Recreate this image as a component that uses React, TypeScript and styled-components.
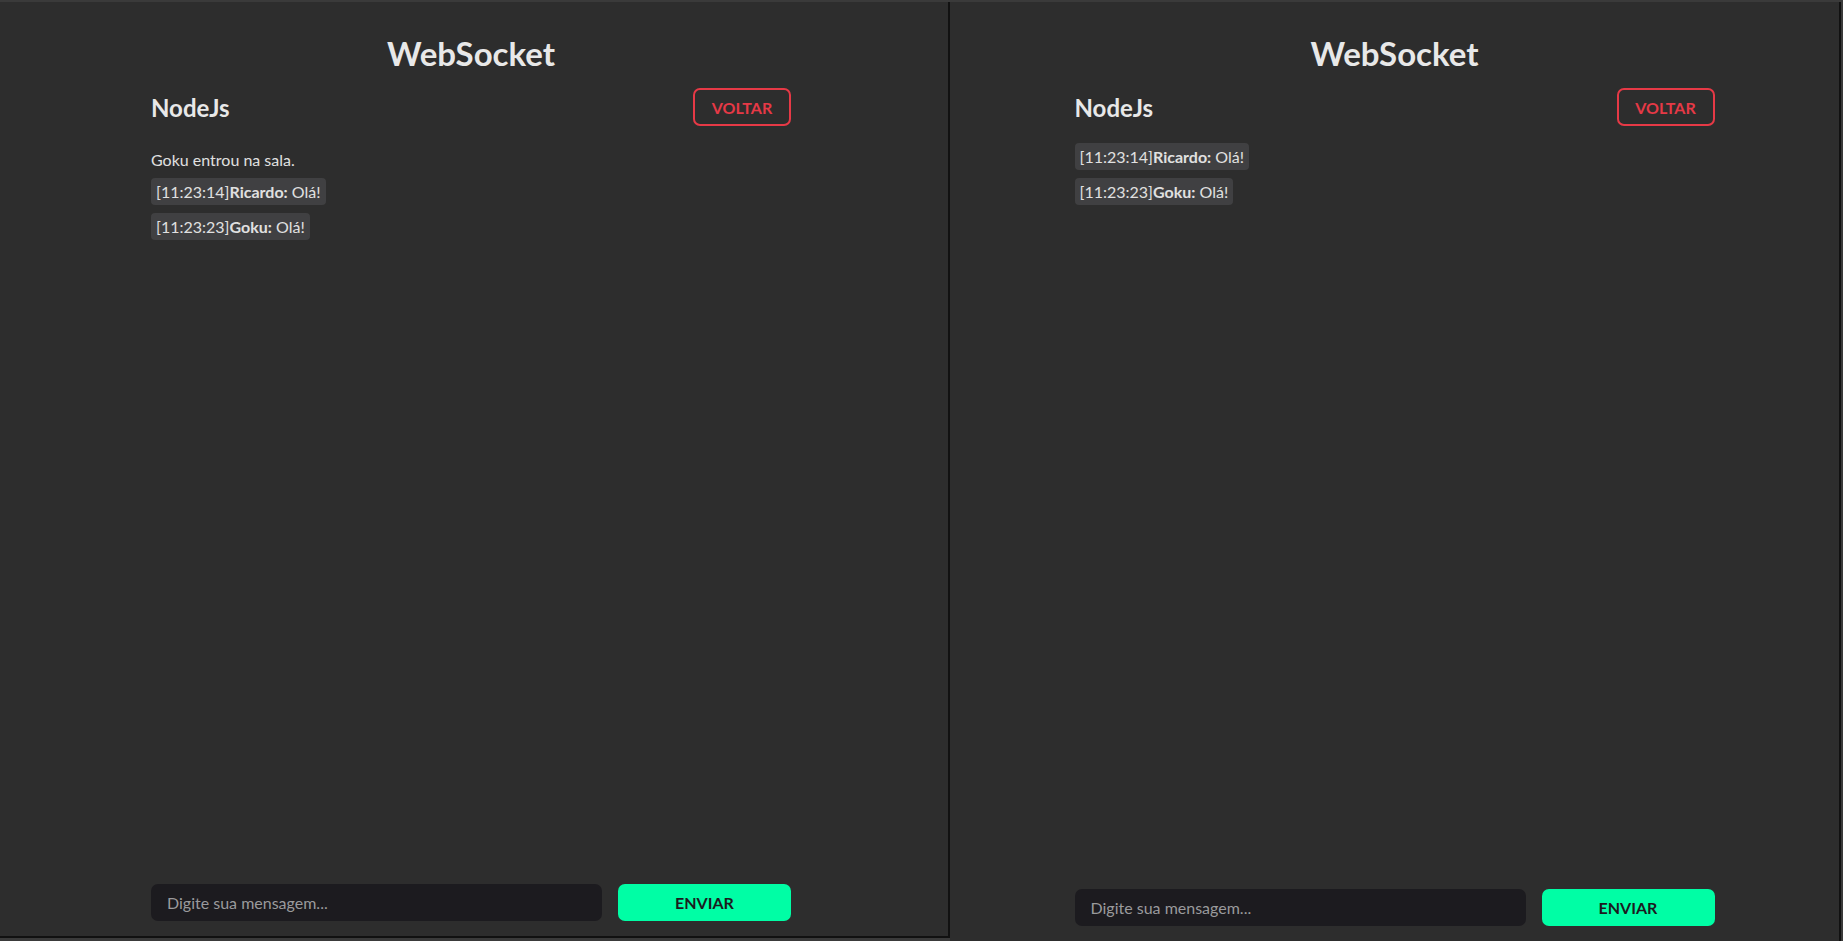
import styled, { createGlobalStyle } from "styled-components"

const GlobalStyle = createGlobalStyle`
  * {
    box-sizing: border-box;
  }

  body {
    margin: 0;
    background: #3a3a3a;
    font-family: Lato, "Open Sans", sans-serif;
    color: #e6e6e6;
    overflow: hidden;
  }
`

interface Message {
  time?: string
  user?: string
  text: string
}

const leftMessages: Message[] = [
  { text: "Goku entrou na sala." },
  { time: "11:23:14", user: "Ricardo", text: "Olá!" },
  { time: "11:23:23", user: "Goku", text: "Olá!" }
]

const rightMessages: Message[] = [
  { time: "11:23:14", user: "Ricardo", text: "Olá!" },
  { time: "11:23:23", user: "Goku", text: "Olá!" }
]

const ChatWindow = ({
  messages,
  first
}: {
  messages: Message[]
  first?: boolean
}) => (
  <Window $first={first}>
    <Title>WebSocket</Title>
    <Content>
      <Header>
        <RoomName>NodeJs</RoomName>
        <BackButton>VOLTAR</BackButton>
      </Header>
      <MessageList>
        {messages.map((m, i) =>
          m.user ? (
            <MessageItem key={i}>
              [{m.time}]<strong>{m.user}:</strong> {m.text}
            </MessageItem>
          ) : (
            <SystemItem key={i}>{m.text}</SystemItem>
          )
        )}
      </MessageList>
      <Footer>
        <MessageInput placeholder="Digite sua mensagem..." />
        <SendButton>ENVIAR</SendButton>
      </Footer>
    </Content>
  </Window>
)

const App = () => (
  <>
    <GlobalStyle />
    <Screen>
      <ChatWindow messages={leftMessages} first />
      <ChatWindow messages={rightMessages} />
    </Screen>
  </>
)

const Screen = styled.div`
  display: flex;
  align-items: flex-start;
  height: 941px;
  padding: 2px 2px 0 0;
`

const Window = styled.div<{ $first?: boolean }>`
  display: flex;
  flex-direction: column;
  align-items: center;
  background: #2d2d2d;
  border-right: 2px solid #111;
  width: ${(p) => (p.$first ? "950px" : "auto")};
  flex: ${(p) => (p.$first ? "none" : "1")};
  height: ${(p) => (p.$first ? "936px" : "939px")};
  border-bottom: ${(p) => (p.$first ? "2px solid #111" : "none")};
  padding: 32px ${(p) => (p.$first ? "6px" : "0")} 15px 0;
`

const Title = styled.h1`
  margin: 0;
  font-size: 33px;
  line-height: 38px;
  font-weight: 700;
  color: #e8e8e8;
`

const Content = styled.div`
  flex: 1;
  width: 640px;
  display: flex;
  flex-direction: column;
`

const Header = styled.div`
  display: flex;
  align-items: center;
  justify-content: space-between;
  margin-top: 16px;
`

const RoomName = styled.h2`
  margin: 0;
  font-size: 24px;
  font-weight: 700;
  color: #e8e8e8;
`

const BackButton = styled.button`
  width: 98px;
  height: 38px;
  border: 2px solid #e63946;
  border-radius: 7px;
  background: transparent;
  color: #e63946;
  font-family: inherit;
  font-size: 16px;
  font-weight: 700;
  cursor: pointer;
`

const MessageList = styled.ul`
  list-style: none;
  margin: 17px 0 0;
  padding: 0;
  display: flex;
  flex-direction: column;
  align-items: flex-start;
  gap: 8px;
`

const MessageItem = styled.li`
  height: 27px;
  line-height: 27px;
  padding: 0 5px;
  border-radius: 4px;
  background: #404042;
  font-size: 16px;
  color: #e0e0e0;

  strong {
    font-weight: 700;
  }
`

const SystemItem = styled(MessageItem)`
  background: transparent;
  padding: 3px 0 0;
`

const Footer = styled.div`
  margin-top: auto;
  display: flex;
  gap: 16px;
`

const MessageInput = styled.input`
  flex: 1;
  height: 37px;
  border: none;
  border-radius: 7px;
  background: #1c1b1f;
  padding: 0 16px;
  font-family: inherit;
  font-size: 16px;
  color: #e0e0e0;
  outline: none;

  &::placeholder {
    color: #9a9a9c;
  }
`

const SendButton = styled.button`
  width: 173px;
  height: 37px;
  border: none;
  border-radius: 7px;
  background: #00fea5;
  color: #1c1b1e;
  font-family: inherit;
  font-size: 16px;
  font-weight: 700;
  cursor: pointer;
`

export default App
